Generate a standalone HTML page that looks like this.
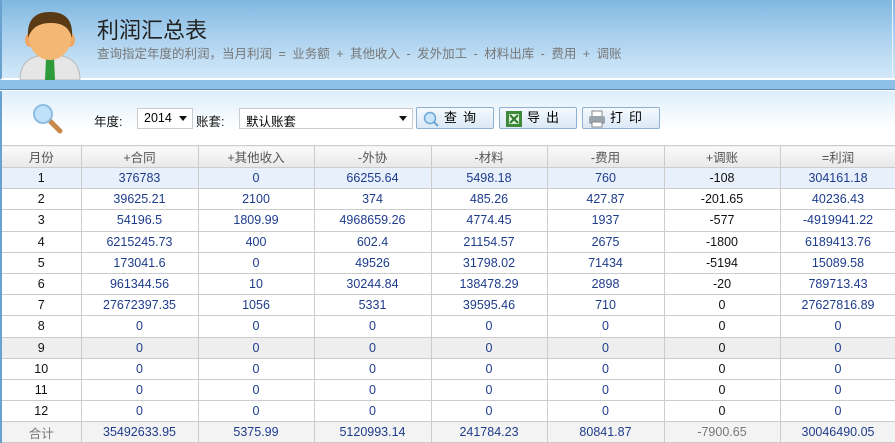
<!DOCTYPE html>
<html><head><meta charset="utf-8"><style>
*{margin:0;padding:0;box-sizing:border-box}
body{width:895px;height:442px;overflow:hidden;font-family:"Liberation Sans","Noto Sans CJK SC",sans-serif;font-size:12px;background:#fff;position:relative}
#hdr{position:absolute;left:0;top:0;width:895px;height:80px;background:linear-gradient(#80b8e0 0%,#a9d0ee 45%,#d3e9f9 100%);border-left:2px solid #6aa2cf;border-bottom:2px solid #fff}
#hdr .in{position:absolute;right:2px;top:0;bottom:0;width:1px;background:#eaf4fc}
#title{position:absolute;left:95px;top:13px;font-size:22px;color:#222}
#sub{position:absolute;left:95px;top:43px;font-size:12.5px;color:#777;word-spacing:3px}
#band{position:absolute;left:0;top:80px;width:895px;height:10px;background:#8dc1e7;border-bottom:1px solid #5f8fb5}
#tb{position:absolute;left:0;top:91px;width:895px;height:54px;background:linear-gradient(#ddeefb,#fff 70%);border-left:2px solid #6aa2cf}
.lbl{position:absolute;top:20px;font-size:12.5px;color:#111}
.sel{position:absolute;top:17px;height:21px;border:1px solid #ccc;background:#fff;font-size:12.5px;padding:2px 6px}
.sel:after{content:"";position:absolute;right:5px;top:7px;border:4px solid transparent;border-top:5px solid #111}
.btn{position:absolute;top:16px;width:78px;height:22px;border:1px solid #8fb0cf;border-radius:2px;background:linear-gradient(#f4f9fe,#dbe9f6);font-size:13px;letter-spacing:6px;padding:2px 0 0 27px;white-space:nowrap;line-height:16px}
.btn svg{position:absolute;left:5px;top:2px}
table{position:absolute;left:0;top:145px;border-collapse:collapse;width:895px;table-layout:fixed}
td{border:1px solid #ccc;text-align:center;height:21.2px;font-size:12.5px;color:#1e3c8c;padding:0}
td:first-child{color:#111;border-left:2px solid #6aa2cf}
td:nth-child(7){color:#111}
tr.h td{background:linear-gradient(#fafafa,#e8e8e8);color:#555;height:22px}
tr.s td{background:#e8f0fb}
tr.g td{background:#eee}
tr.t td{background:#f3f3f3}
tr.t td:first-child,tr.t td:nth-child(7){color:#777}
</style></head><body>
<div id="hdr"><div class="in"></div>
<svg style="position:absolute;left:16px;top:8px" width="64" height="72" viewBox="0 0 64 72">
<path d="M2 72 Q2 52 20 48 L44 48 Q62 52 62 72Z" fill="#e6e6e6" stroke="#bbb"/>
<path d="M28 50 L36 50 L37 72 L27 72Z" fill="#2e9a3a"/>
<ellipse cx="12" cy="32" rx="5" ry="7" fill="#eea865"/><ellipse cx="52" cy="32" rx="5" ry="7" fill="#eea865"/>
<ellipse cx="32" cy="30" rx="21" ry="22" fill="#f5b874"/>
<path d="M10 30 Q8 4 32 4 Q56 4 54 30 Q50 14 32 15 Q15 15 10 30Z" fill="#5a3a14"/>
</svg>
<div id="title">利润汇总表</div>
<div id="sub">查询指定年度的利润，当月利润 = 业务额 + 其他收入 - 发外加工 - 材料出库 - 费用 + 调账</div>
</div>
<div id="band"></div>
<div id="tb">
<svg style="position:absolute;left:30px;top:12px" width="32" height="32" viewBox="0 0 32 32"><line x1="15" y1="15" x2="28" y2="28" stroke="#c8884a" stroke-width="5" stroke-linecap="round"/><circle cx="11" cy="11" r="9" fill="#bfe2fa" stroke="#8fbde0" stroke-width="2"/></svg>
<span class="lbl" style="left:92px">年度:</span>
<div class="sel" style="left:135px;width:56px">2014</div>
<span class="lbl" style="left:194px">账套:</span>
<div class="sel" style="left:237px;width:174px">默认账套</div>
<div class="btn" style="left:414px"><svg width="18" height="18"><circle cx="8" cy="8" r="5.5" fill="#cbe6fa" stroke="#6aa6d6" stroke-width="1.5"/><line x1="12" y1="12" x2="16" y2="16" stroke="#6aa6d6" stroke-width="2"/></svg>查询</div>
<div class="btn" style="left:497px"><svg width="18" height="18"><rect x="1" y="1" width="16" height="16" fill="#3f8a3a"/><rect x="4" y="4" width="10" height="10" fill="#dfeedd"/><path d="M5 5 L13 13 M13 5 L5 13" stroke="#2c7a2a" stroke-width="2"/></svg>导出</div>
<div class="btn" style="left:580px"><svg width="18" height="18"><rect x="4" y="1" width="10" height="6" fill="#fff" stroke="#888"/><rect x="1" y="6" width="16" height="8" rx="2" fill="#9aa4ad"/><rect x="4" y="12" width="10" height="5" fill="#fff" stroke="#888"/></svg>打印</div>
</div>
<table>
<colgroup><col style="width:80px"><col style="width:117px"><col style="width:116px"><col style="width:117px"><col style="width:116px"><col style="width:117px"><col style="width:116px"><col style="width:116px"></colgroup>
<tr class="h"><td style="color:#555">月份</td><td>+合同</td><td>+其他收入</td><td>-外协</td><td>-材料</td><td>-费用</td><td style="color:#555">+调账</td><td>=利润</td></tr>
<tr class="s"><td>1</td><td>376783</td><td>0</td><td>66255.64</td><td>5498.18</td><td>760</td><td>-108</td><td>304161.18</td></tr>
<tr><td>2</td><td>39625.21</td><td>2100</td><td>374</td><td>485.26</td><td>427.87</td><td>-201.65</td><td>40236.43</td></tr>
<tr><td>3</td><td>54196.5</td><td>1809.99</td><td>4968659.26</td><td>4774.45</td><td>1937</td><td>-577</td><td>-4919941.22</td></tr>
<tr><td>4</td><td>6215245.73</td><td>400</td><td>602.4</td><td>21154.57</td><td>2675</td><td>-1800</td><td>6189413.76</td></tr>
<tr><td>5</td><td>173041.6</td><td>0</td><td>49526</td><td>31798.02</td><td>71434</td><td>-5194</td><td>15089.58</td></tr>
<tr><td>6</td><td>961344.56</td><td>10</td><td>30244.84</td><td>138478.29</td><td>2898</td><td>-20</td><td>789713.43</td></tr>
<tr><td>7</td><td>27672397.35</td><td>1056</td><td>5331</td><td>39595.46</td><td>710</td><td>0</td><td>27627816.89</td></tr>
<tr><td>8</td><td>0</td><td>0</td><td>0</td><td>0</td><td>0</td><td>0</td><td>0</td></tr>
<tr class="g"><td>9</td><td>0</td><td>0</td><td>0</td><td>0</td><td>0</td><td>0</td><td>0</td></tr>
<tr><td>10</td><td>0</td><td>0</td><td>0</td><td>0</td><td>0</td><td>0</td><td>0</td></tr>
<tr><td>11</td><td>0</td><td>0</td><td>0</td><td>0</td><td>0</td><td>0</td><td>0</td></tr>
<tr><td>12</td><td>0</td><td>0</td><td>0</td><td>0</td><td>0</td><td>0</td><td>0</td></tr>
<tr class="t"><td>合计</td><td>35492633.95</td><td>5375.99</td><td>5120993.14</td><td>241784.23</td><td>80841.87</td><td>-7900.65</td><td>30046490.05</td></tr>
</table>
</body></html>
